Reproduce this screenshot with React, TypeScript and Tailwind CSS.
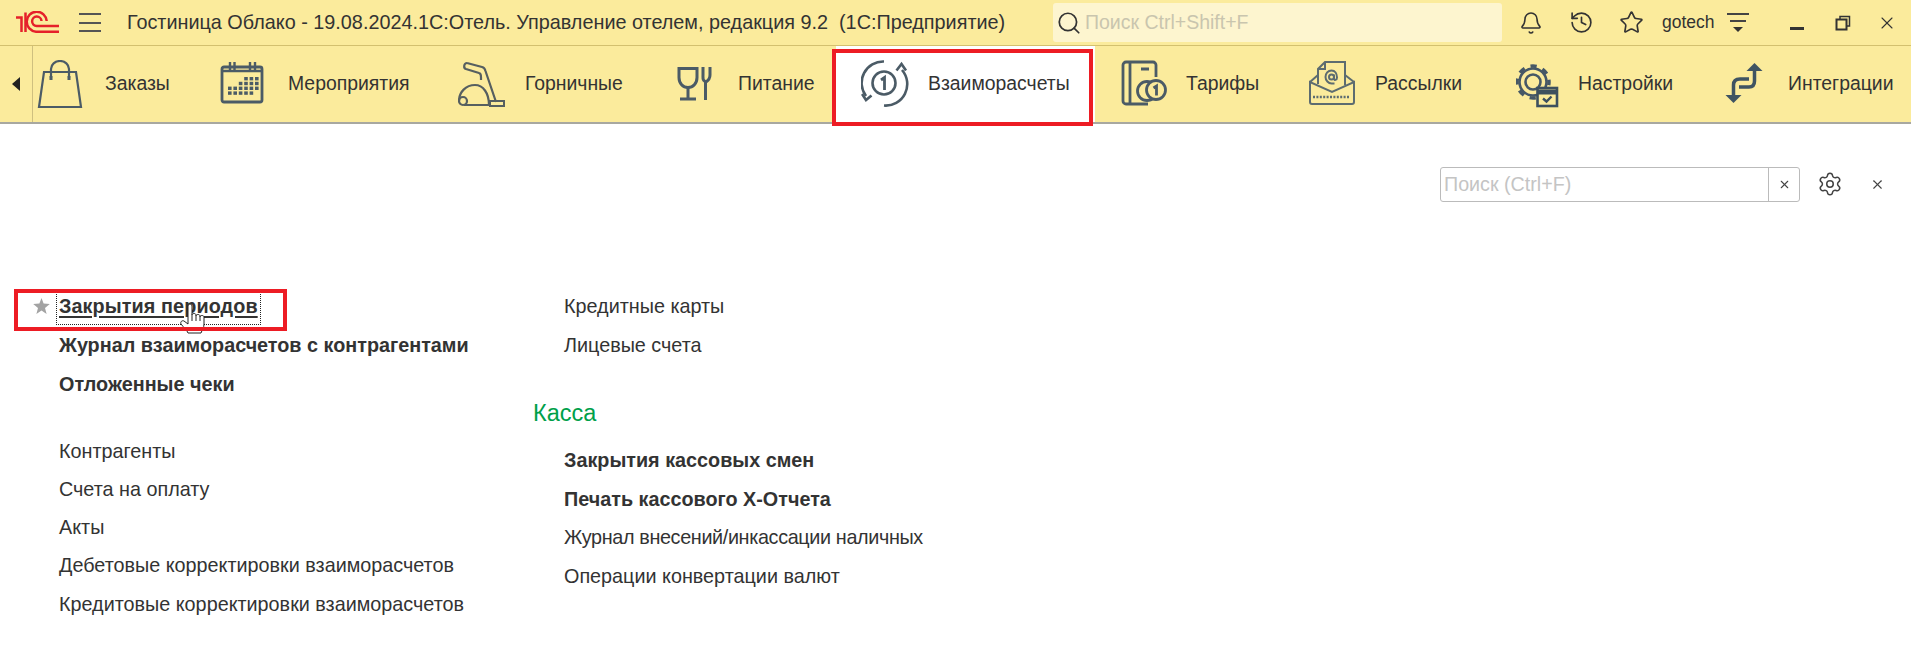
import { Bell, History, Star, Search, X, Settings } from "lucide-react";

const ICON = "#4b5b66";

function BagIcon() {
  return (
    <svg width="48" height="48" viewBox="0 0 48 48" fill="none" stroke={ICON} strokeWidth="2.200">
      <path d="M7 12h32l5 35H2z" />
      <path d="M14 18V9a9 8 0 0 1 18 0v9" />
      <path d="M14 16v4M32 16v4" strokeWidth="3" />
    </svg>
  );
}

function CalendarIcon() {
  const rows = [
    [3, 4, 5],
    [2, 3, 4, 5],
    [0, 1, 2, 3, 4, 5],
    [0, 1, 2, 3, 4],
  ];
  return (
    <svg width="48" height="48" viewBox="0 0 48 48" fill="none" stroke={ICON} strokeWidth="2.800">
      <rect x="3" y="7" width="40" height="35" rx="2" />
      <path d="M3 11h40M11 2v9M15.500 2v9M31 2v9M36 2v9" strokeWidth="2.400" />
      {rows.map((cols, r) =>
        cols.map((c) => <rect key={`${r}-${c}`} x={9 + c * 5.400} y={17 + r * 4.800} width="3.600" height="3.400" fill={ICON} stroke="none" />)
      )}
    </svg>
  );
}

function VacuumIcon() {
  return (
    <svg width="48" height="48" viewBox="0 0 48 48" fill="none" stroke="#565f60" strokeWidth="2.200">
      <path d="M9 3l15 4c2 .500 3 2 3.500 4L38 42" />
      <path d="M9 3c-3 0-4 5-1 6l13 4c2 .500 2 2 2 4v3" />
      <path d="M1 41c0-9 7-16 16-16 8 0 14 8 14 20H6" />
      <circle cx="5" cy="41" r="4" />
      <rect x="32" y="41" width="14" height="5" strokeWidth="2" />
    </svg>
  );
}

function FoodIcon() {
  return (
    <svg width="48" height="48" viewBox="0 0 48 48" fill="none" stroke={ICON} strokeWidth="3">
      <path d="M9 8.500h18v9c0 6-4 10-9 10s-9-4-9-10z" />
      <path d="M18 28v10M10 39h16" />
      <path d="M33 7v8c0 3-.500 5 1.500 6l1 1V40" />
      <path d="M40 7v8c0 3-1 5-4 7" />
    </svg>
  );
}

function SyncIcon() {
  return (
    <svg width="48" height="48" viewBox="0 0 48 48" fill="none" stroke={ICON} strokeWidth="2.600">
      <circle cx="23" cy="23" r="11.500" />
      <path d="M20 20l3.500-2.500V30" strokeWidth="2.800" />
      <path d="M23 1.500A21.500 21.500 0 0 0 5 36" />
      <path d="M23 45.500A21.500 21.500 0 0 0 41 10" />
      <path d="M1 34l4 6 5.500-4.500M35.500 10.500L40.500 4l4.500 6.500" />
    </svg>
  );
}

function TariffIcon() {
  return (
    <svg width="48" height="48" viewBox="0 0 48 48" fill="none" stroke={ICON} strokeWidth="2.800">
      <path d="M35 17V5a3 3 0 0 0-3-3H5a3 3 0 0 0-3 3v36a3 3 0 0 0 3 3h22" />
      <path d="M9 2v42M20 9h8" />
      <circle cx="26" cy="31" r="9.500" />
      <circle cx="35" cy="30" r="9.500" fill="#fbeb9c" />
      <path d="M32.500 28l3-2v9.500" />
    </svg>
  );
}

function MailIcon() {
  return (
    <svg width="48" height="48" viewBox="0 0 48 48" fill="none" stroke="#5d6c70" strokeWidth="2">
      <path d="M1 22v20a2 2 0 0 0 2 2h40a2 2 0 0 0 2-2V22L23 32z" />
      <path d="M1 22l8-7M45 22l-9-7" />
      <path d="M9 24V9l7-7h20v23" />
      <path d="M9 9h7V2" />
      <circle cx="22.500" cy="17" r="2.500" />
      <path d="M25 14.500v4c0 2 3 2 3-1 0-4-2-7-5.500-7s-6 3-6 6.500 3 6.500 6 6.500h3" />
      <path d="M4 37h37" strokeWidth="2.400" strokeDasharray="2 1.400" />
    </svg>
  );
}

function GearCalIcon() {
  return (
    <svg width="48" height="48" viewBox="0 0 48 48" fill="none" stroke="#465866" strokeWidth="2.600">
      <circle cx="17" cy="22" r="13.500" />
      <circle cx="17" cy="22" r="16" strokeWidth="3.500" strokeDasharray="6.300 6.260" strokeDashoffset="3" />
      <circle cx="17" cy="22" r="7.500" />
      <rect x="21.500" y="28" width="19.500" height="18" fill="#fbeb9c" stroke="#3d505e" />
      <path d="M21 32h20" stroke="#3d505e" strokeWidth="5" />
      <path d="M27 38.500l3.500 3 5-5" stroke="#3d505e" strokeWidth="2.400" />
    </svg>
  );
}

function IntegrationIcon() {
  return (
    <svg width="48" height="48" viewBox="0 0 48 48" fill="none" stroke="#3f5462" strokeWidth="3.500">
      <path d="M25 19H16c-4 0-6.500 2-6.500 6v11" />
      <path d="M15 27h10c4 0 5.500-2 5.500-6V10" />
      <path fill="#3f5462" stroke="none" d="M30.500 3l8 8h-16zM9.500 43l-8-8h16z" />
    </svg>
  );
}

const tabs = [
  { label: "Заказы", icon: <BagIcon />, c: "w-[163px] pl-[4px] gap-[20px]" },
  { label: "Мероприятия", icon: <CalendarIcon />, c: "w-[238px] pl-[23px] gap-[21px]" },
  { label: "Горничные", icon: <VacuumIcon />, c: "w-[212px] pl-[24px] gap-[19px]" },
  { label: "Питание", icon: <FoodIcon />, c: "w-[190px] pl-[24px] gap-[20px]" },
  { label: "Взаиморасчеты", icon: <SyncIcon />, c: "w-[259px] pl-[25px] gap-[19px] bg-white", active: true },
  { label: "Тарифы", icon: <TariffIcon />, c: "w-[190px] pl-[26px] gap-[17px]" },
  { label: "Рассылки", icon: <MailIcon />, c: "w-[207px] pl-[24px] gap-[18px]" },
  { label: "Настройки", icon: <GearCalIcon />, c: "w-[208px] pl-[24px] gap-[14px]" },
  { label: "Интеграции", icon: <IntegrationIcon />, c: "w-[212px] pl-[24px] gap-[16px]" },
];

function Row({ children, bold, tight, className = "" }: { children: React.ReactNode; bold?: boolean; tight?: boolean; className?: string }) {
  return (
    <div className={`${tight ? "h-[38.200px]" : "h-[38.500px]"} flex items-center text-[19.800px] text-[#333] whitespace-nowrap ${bold ? "font-bold" : ""} ${className}`}>
      {children}
    </div>
  );
}

function HandCursor() {
  return (
    <svg className="absolute left-[120px] top-[11px]" width="26" height="32" viewBox="0 0 26 32" fill="#fff" stroke="#222" strokeWidth="1">
      <path d="M9 17V3a2 2 0 0 1 4 0v9c0-2 4-2 4 0v1c0-2 4-2 4 0v1c0-2 4-2 4 0v7c0 4-2 6-3 9H9c-1-3-4-5-7-9-1-2 1-4 3-3l4 3z" />
      <path d="M13 12v6M17 13v5M21 14v4" />
    </svg>
  );
}

export default function App() {
  return (
    <div className="w-[1911px] h-[658px] bg-white overflow-hidden font-['Liberation_Sans',Arial,sans-serif]">
      {/* шапка */}
      <div className="h-[46px] bg-[#fbeb9c] border-b border-[#d3c06f] flex items-center text-[#333]">
        <svg className="ml-[15px]" width="46" height="24" viewBox="0 0 46 24" fill="none" stroke="#e5202a" strokeWidth="2.500">
          <path d="M1 6.500h5.500V21M10.500 1.500V21" />
          <path d="M44 20.700H21A10 10 0 1 1 31.700 10" />
          <path d="M44 15H21.700A4.700 4.700 0 1 1 26.500 10" />
        </svg>
        <div className="ml-[18px] w-[22px] flex flex-col gap-[6.500px]">
          <div className="h-[2px] bg-[#555]" />
          <div className="h-[2px] bg-[#555]" />
          <div className="h-[2px] bg-[#555]" />
        </div>
        <div className="ml-[26px] w-[926px] text-[19.820px] whitespace-pre">Гостиница Облако - 19.08.2024.1С:Отель. Управление отелем, редакция 9.2  (1С:Предприятие)</div>
        <div className="w-[449px] h-[39px] bg-[#fdf5cf] rounded-[3px] flex items-center pl-[3px]">
          <Search size={26} strokeWidth={1.6} className="text-[#333]" />
          <span className="ml-[3px] text-[19.500px] text-[#c9c5ae]">Поиск Ctrl+Shift+F</span>
        </div>
        <Bell size={24} strokeWidth={1.6} className="ml-[17px] text-[#333]" />
        <History size={25} strokeWidth={1.6} className="ml-[26px] text-[#333]" />
        <Star size={25} strokeWidth={1.6} className="ml-[25px] text-[#333]" />
        <span className="ml-[18px] text-[17.500px]">gotech</span>
        <div className="ml-[12px] w-[22px] flex flex-col items-center gap-[5px]">
          <div className="h-[2px] w-full bg-[#444]" />
          <div className="h-[2px] w-[16px] bg-[#444]" />
          <div className="w-0 h-0 border-x-[5px] border-x-transparent border-t-[5px] border-t-[#333]" />
        </div>
        <div className="ml-[41px] w-[14px] h-[2.500px] bg-[#333] mt-[12px]" />
        <svg className="ml-[31px]" width="16" height="16" viewBox="0 0 16 16" fill="none" stroke="#333" strokeWidth="2">
          <rect x="1.500" y="4.500" width="10" height="10" />
          <path d="M5 4V1.500h9.500V11H12" strokeWidth="1.500" />
        </svg>
        <X size={20} strokeWidth={1.3} className="ml-[26px] text-[#333]" />
      </div>

      {/* панель разделов */}
      <div className="h-[78px] bg-[#fbeb9c] border-b-2 border-[#a8a8a0] flex items-stretch">
        <div className="w-[33px] shrink-0 border-r border-[#cfc07f] flex items-center justify-center">
          <div className="w-0 h-0 border-y-[7.500px] border-y-transparent border-r-[8px] border-r-[#222]" />
        </div>
        {tabs.map((t) => (
          <div key={t.label} className={`${t.c} shrink-0 relative flex items-center text-[19.400px] text-[#333]`}>
            {t.icon}
            <span className="whitespace-nowrap">{t.label}</span>
            {t.active && <div className="absolute -left-[4px] right-[2px] top-[3px] -bottom-[4px] border-[4px] border-[#ed1c24]" />}
          </div>
        ))}
      </div>

      {/* поиск */}
      <div className="h-[165px] flex justify-end items-start pt-[43px]">
        <div className="w-[360px] h-[35px] border border-[#bbb] rounded-[3px] flex items-stretch">
          <div className="flex-1 pl-[3px] flex items-center text-[19.700px] text-[#c4c4c4]">Поиск (Ctrl+F)</div>
          <div className="w-[31px] border-l border-[#bbb] flex items-center justify-center">
            <X size={13} strokeWidth={2} className="text-[#444]" />
          </div>
        </div>
        <Settings size={26} strokeWidth={1.4} className="ml-[17px] mt-[4px] text-[#444]" />
        <X size={15} strokeWidth={1.8} className="ml-[27px] mr-[26px] mt-[10px] text-[#444]" />
      </div>

      {/* ссылки */}
      <div className="flex -mt-[1px]">
        <div className="w-[565px] pl-[59px] shrink-0">
          <div className="relative">
            <Row bold>
              <span className="relative tracking-[0.100px] underline decoration-2 underline-offset-[3px] outline-dotted outline-1 outline-[#222] outline-offset-[2px]">
                Закрытия периодов
                <HandCursor />
              </span>
            </Row>
            <svg className="absolute -left-[26px] top-[10px]" width="17" height="16" viewBox="0 0 17 16" fill="#a3a3a3">
              <polygon points="8.500,0 10.600,5.600 16.800,6 12,9.900 13.600,15.900 8.500,12.500 3.400,15.900 5,9.900 .2,6 6.400,5.600" />
            </svg>
            <div className="absolute -left-[45px] top-[1px] w-[273px] h-[42px] border-[4px] border-[#ed1c24]" />
          </div>
          <Row bold>Журнал взаиморасчетов с контрагентами</Row>
          <Row bold className="pt-[1px]">Отложенные чеки</Row>
          <div className="h-[29px]" />
          <Row tight>Контрагенты</Row>
          <Row tight>Счета на оплату</Row>
          <Row tight>Акты</Row>
          <Row tight>Дебетовые корректировки взаиморасчетов</Row>
          <Row tight>Кредитовые корректировки взаиморасчетов</Row>
        </div>
        <div className="-ml-[1px]">
          <Row>Кредитные карты</Row>
          <Row>Лицевые счета</Row>
          <div className="h-[30px]" />
          <div className="-ml-[31px] h-[38px] flex items-center text-[23.500px] text-[#00a04a]">Касса</div>
          <div className="h-[9px]" />
          <Row bold>Закрытия кассовых смен</Row>
          <Row bold>Печать кассового Х-Отчета</Row>
          <Row className="tracking-[-0.350px]">Журнал внесений/инкассации наличных</Row>
          <Row>Операции конвертации валют</Row>
        </div>
      </div>
    </div>
  );
}
